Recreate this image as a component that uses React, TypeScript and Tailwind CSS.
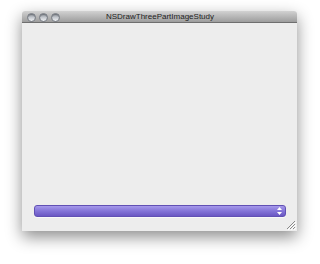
import React from "react";

function Light() {
  return (
    <div className="w-[9px] h-[9px] rounded-full border border-[#777c84] bg-gradient-to-b from-[#8e939b] via-[#c6cad0] to-[#eef0f2] shadow-[inset_0_1px_1px_rgba(0,0,0,0.25)]" />
  );
}

export default function App() {
  return (
    <div className="w-[320px] h-[264px] bg-white pl-[22px] pt-[11px]" style={{ fontFamily: '"Liberation Sans", Arial, sans-serif' }}>
      <div className="relative w-[275px] h-[220px] flex flex-col shadow-[0_6px_16px_rgba(0,0,0,0.45)] rounded-t-[3px]">
        <div className="relative h-[12px] flex items-center rounded-t-[3px] bg-gradient-to-b from-[#d2d2d2] to-[#9d9d9d] border-b border-[#6f6f6f]">
          <div className="flex gap-[3px] pl-[5px] pt-[1px]">
            <Light />
            <Light />
            <Light />
          </div>
          <div className="absolute inset-0 flex items-center justify-center text-[8px] leading-none text-[#222] pl-[1px] pt-[1px]">
            NSDrawThreePartImageStudy
          </div>
        </div>
        <div className="flex-1 bg-[#ededed] flex flex-col justify-end px-[12px] pb-[14px] pr-[11px]">
          <div className="h-[12px] rounded-[3px] bg-gradient-to-b from-[#a699ea] via-[#8474d8] to-[#6a57c3] border border-[#6150b4] flex items-center justify-end pr-[3px] shadow-[0_1px_0_rgba(255,255,255,0.6)]">
            <svg width="5" height="8" viewBox="0 0 5 8">
              <path d="M2.5 0 L5 3 L0 3 Z" fill="#fff" />
              <path d="M2.5 8 L5 5 L0 5 Z" fill="#fff" />
            </svg>
          </div>
        </div>
        <svg className="absolute right-[1px] bottom-[1px]" width="10" height="10" viewBox="0 0 10 10">
          <path d="M9 1 L1 9 M9 4 L4 9 M9 7 L7 9" stroke="#8a8a8a" strokeWidth="1" />
          <path d="M10 2 L2 10 M10 5 L5 10 M10 8 L8 10" stroke="#fff" strokeWidth="1" />
        </svg>
      </div>
    </div>
  );
}
